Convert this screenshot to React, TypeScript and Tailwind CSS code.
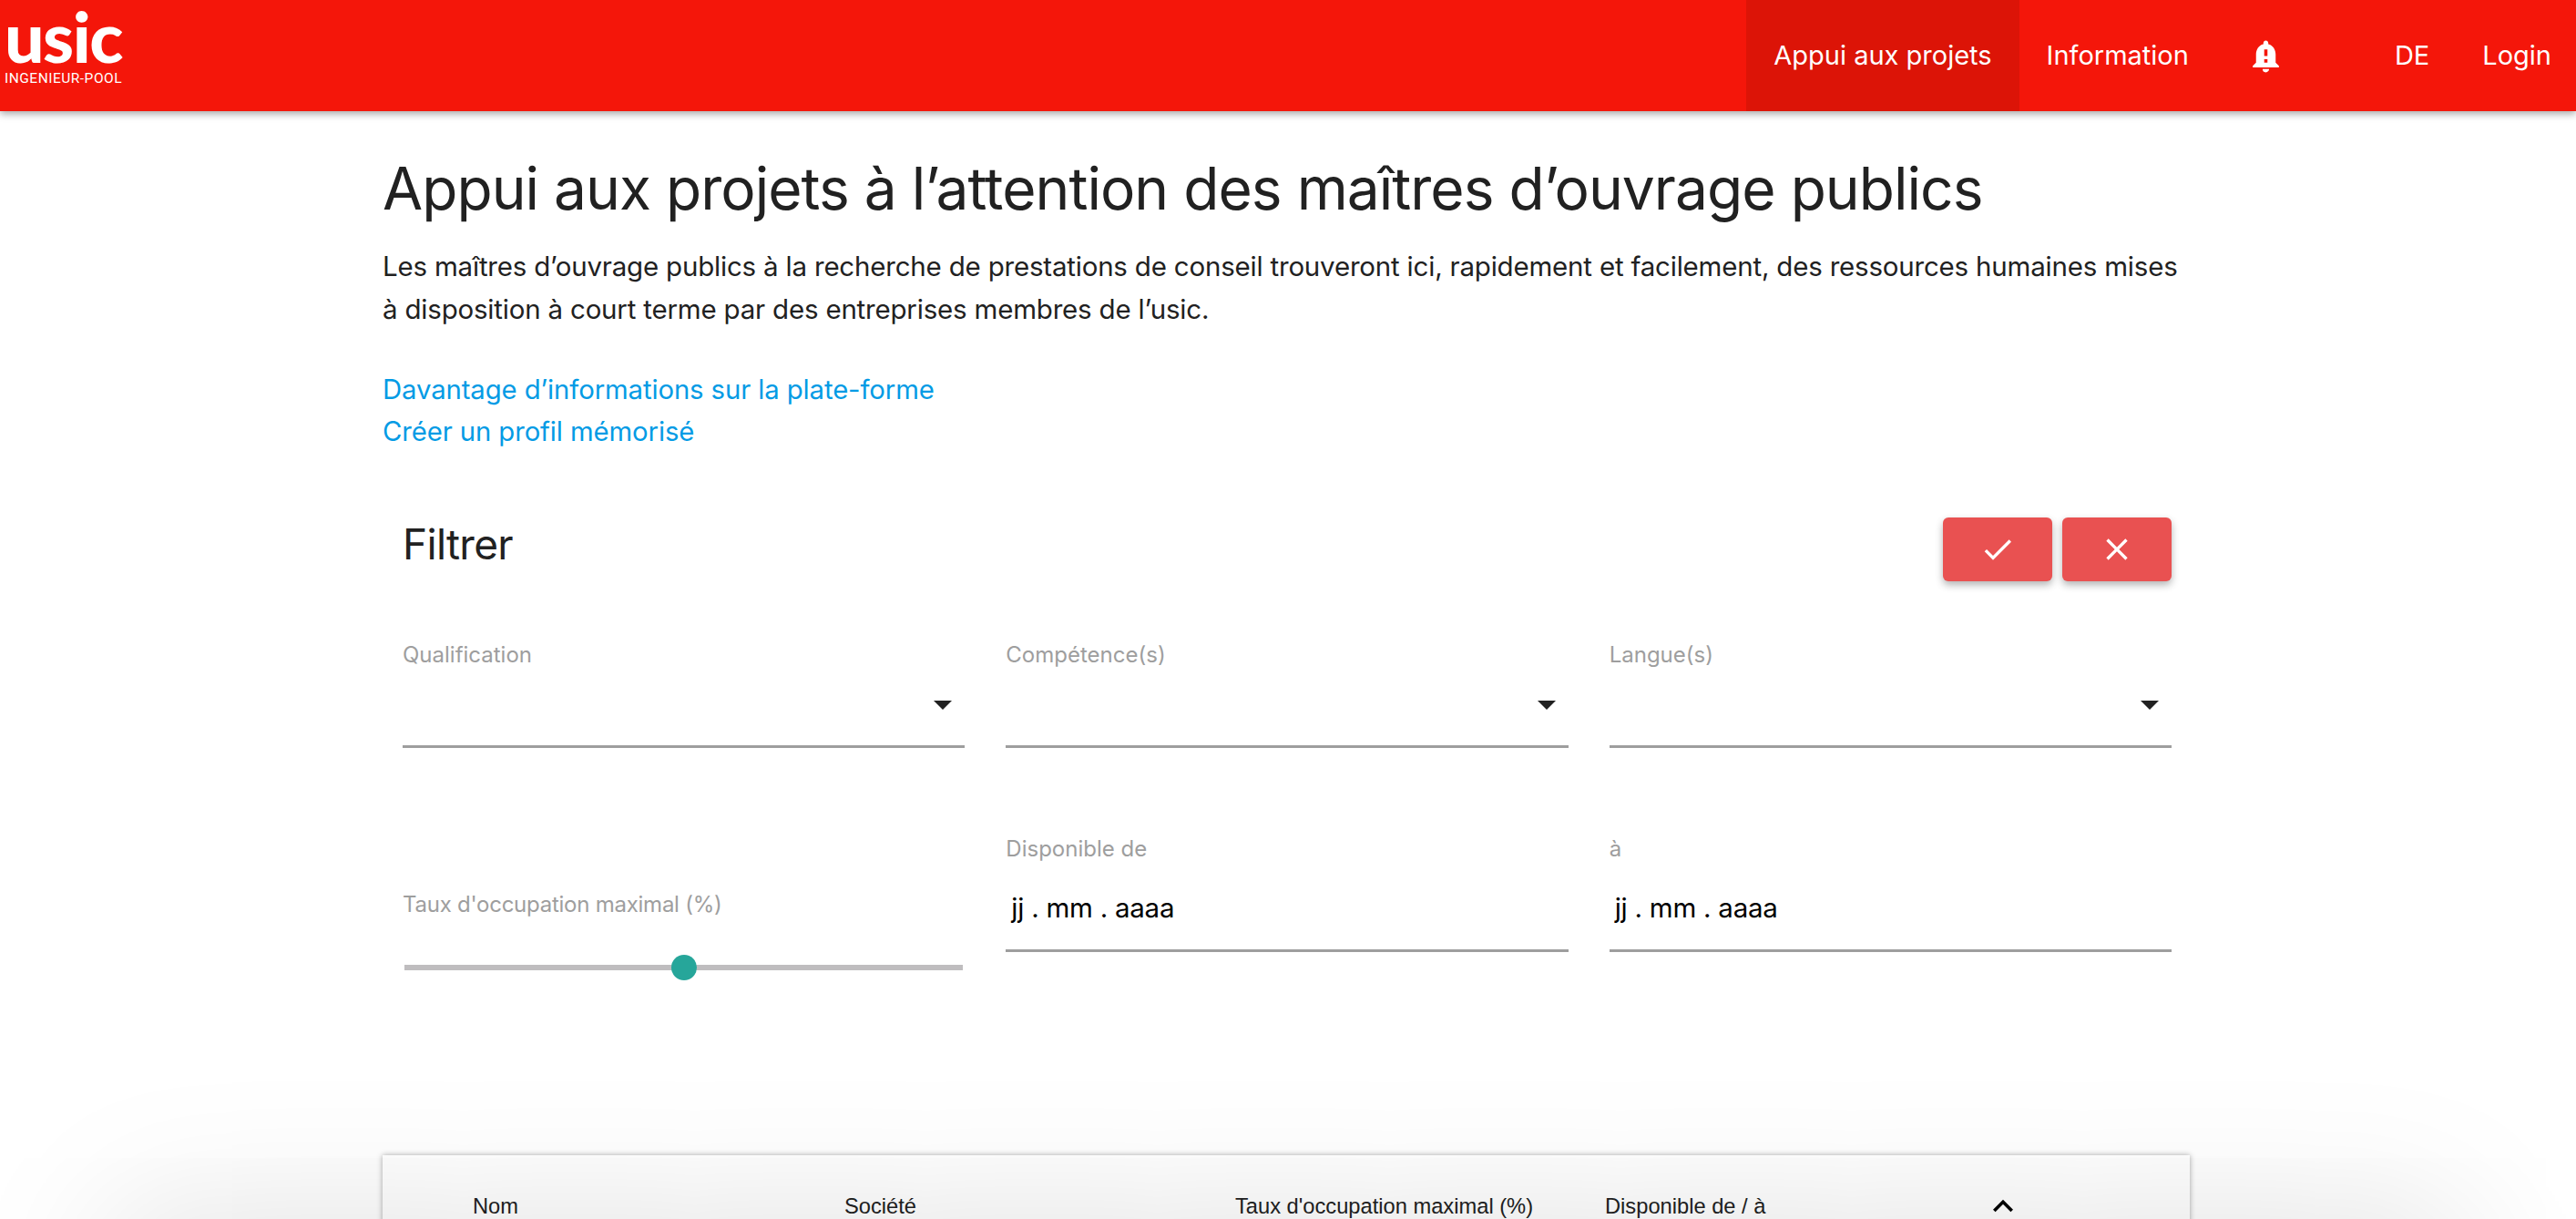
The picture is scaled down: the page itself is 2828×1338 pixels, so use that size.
import { MdCheck, MdClose, MdExpandLess, MdNotificationImportant } from "react-icons/md";

const font = "font-['Inter','Liberation_Sans',sans-serif]";

function Label({ children, tight }: { children: string; tight?: boolean }) {
  return (
    <div className={`h-[30px] text-[24px] leading-[30px] text-[#9e9e9e] ${tight ? "tracking-[-0.25px]" : ""}`}>
      {children}
    </div>
  );
}

function SelectField({ label }: { label: string }) {
  return (
    <div>
      <Label>{label}</Label>
      <div className="flex h-[87px] items-center justify-end border-b-[3px] border-[#9e9e9e] pr-[14px] pb-[4px]">
        <div className="h-0 w-0 border-x-[10px] border-t-[10px] border-x-transparent border-t-[#212121]" />
      </div>
    </div>
  );
}

function DateField({ label }: { label: string }) {
  return (
    <div>
      <Label>{label}</Label>
      <div className="flex h-[98px] items-center border-b-[3px] border-[#9e9e9e] px-[6px] pt-[3px] text-[29.5px] tracking-[-0.25px] text-black">
        jj . mm . aaaa
      </div>
    </div>
  );
}

export default function App() {
  return (
    <div className={`relative h-[1338px] overflow-hidden bg-white ${font}`}>
      {/* Header */}
      <header className="relative z-10 flex h-[122px] items-stretch justify-between bg-[#f4160a] text-[29px] text-white shadow-[0_3px_8px_rgba(0,0,0,0.35)]">
        <div className="flex flex-col pl-[5px]">
          <div className="mt-[4px] h-[70px] font-['Lato'] text-[77px] leading-[70px] font-black tracking-[-1.5px]">usic</div>
          <div className="mt-[3px] font-['Roboto'] text-[15.5px] leading-[18px] tracking-[0.5px]">INGENIEUR-POOL</div>
        </div>
        <nav className="flex items-stretch">
          <a className="flex items-center bg-[#dc1407] px-[30px]">Appui aux projets</a>
          <a className="flex items-center px-[30px]">Information</a>
          <a className="ml-[33px] flex items-center">
            <MdNotificationImportant size={43} />
          </a>
          <a className="ml-[90px] flex items-center px-[30px]">DE</a>
          <a className="flex items-center pr-[27px] pl-[28px]">Login</a>
        </nav>
      </header>

      <main className="ml-[420px] w-[1984px] text-[#212121]">
        <h1 className="mt-[45px] text-[64px] leading-[80px] tracking-[-0.96px]">Appui aux projets à l’attention des maîtres d’ouvrage publics</h1>
        <p className="mt-[22px] text-[29.5px] leading-[47px] tracking-[-0.2px]">
          Les maîtres d’ouvrage publics à la recherche de prestations de conseil trouveront ici, rapidement et facilement, des ressources humaines mises à disposition à court terme par des entreprises membres de l’usic.
        </p>
        <div className="mt-[42px] text-[29.3px] leading-[46px] tracking-[-0.1px] text-[#039be5]">
          <a className="block">Davantage d’informations sur la plate-forme</a>
          <a className="block">Créer un profil mémorisé</a>
        </div>

        {/* Filter */}
        <section className="mt-[71px] pr-[20px] pl-[22px]">
          <div className="flex items-start justify-between">
            <h2 className="text-[46px] leading-[58px] tracking-[-0.7px]">Filtrer</h2>
            <div className="flex gap-[11px]">
              <button className="flex h-[70px] w-[120px] items-center justify-center rounded-[6px] bg-[#e95151] text-white shadow-[0_4px_8px_rgba(0,0,0,0.3)]">
                <MdCheck size={40} />
              </button>
              <button className="flex h-[70px] w-[120px] items-center justify-center rounded-[6px] bg-[#e95151] text-white shadow-[0_4px_8px_rgba(0,0,0,0.3)]">
                <MdClose size={40} />
              </button>
            </div>
          </div>

          <div className="mt-[66px] grid grid-cols-3 gap-x-[45px] gap-y-[96px]">
            <SelectField label="Qualification" />
            <SelectField label="Compétence(s)" />
            <SelectField label="Langue(s)" />
            <div className="mt-[61px] h-[101px]">
              <Label tight>Taux d'occupation maximal (%)</Label>
              <div className="relative mx-[2px] mt-[51px] h-[6px] bg-[#bfbdbf]">
                <div className="absolute top-[-11px] left-[293px] h-[28px] w-[28px] rounded-full bg-[#26a69a]" />
              </div>
            </div>
            <DateField label="Disponible de" />
            <DateField label="à" />
          </div>
        </section>

        {/* Results table */}
        <section className="mt-[189px] h-[200px] bg-white pt-[41px] font-['Liberation_Sans'] text-[23.7px] leading-[30px] shadow-[0_0_6px_rgba(0,0,0,0.35)]">
          <div className="grid grid-cols-[99px_408px_429px_406px_426px_1fr]">
            <div />
            <div>Nom</div>
            <div>Société</div>
            <div>Taux d'occupation maximal (%)</div>
            <div>Disponible de / à</div>
            <div className="text-black">
              <MdExpandLess size={44} className="mt-[-7px] ml-[-11px]" />
            </div>
          </div>
        </section>
      </main>

      {/* shadow of the next panel, below the fold */}
      <div className="pointer-events-none absolute top-[1345px] right-[125px] left-[125px] h-[400px] shadow-[0_0_170px_rgba(0,0,0,0.15)]" />
    </div>
  );
}
